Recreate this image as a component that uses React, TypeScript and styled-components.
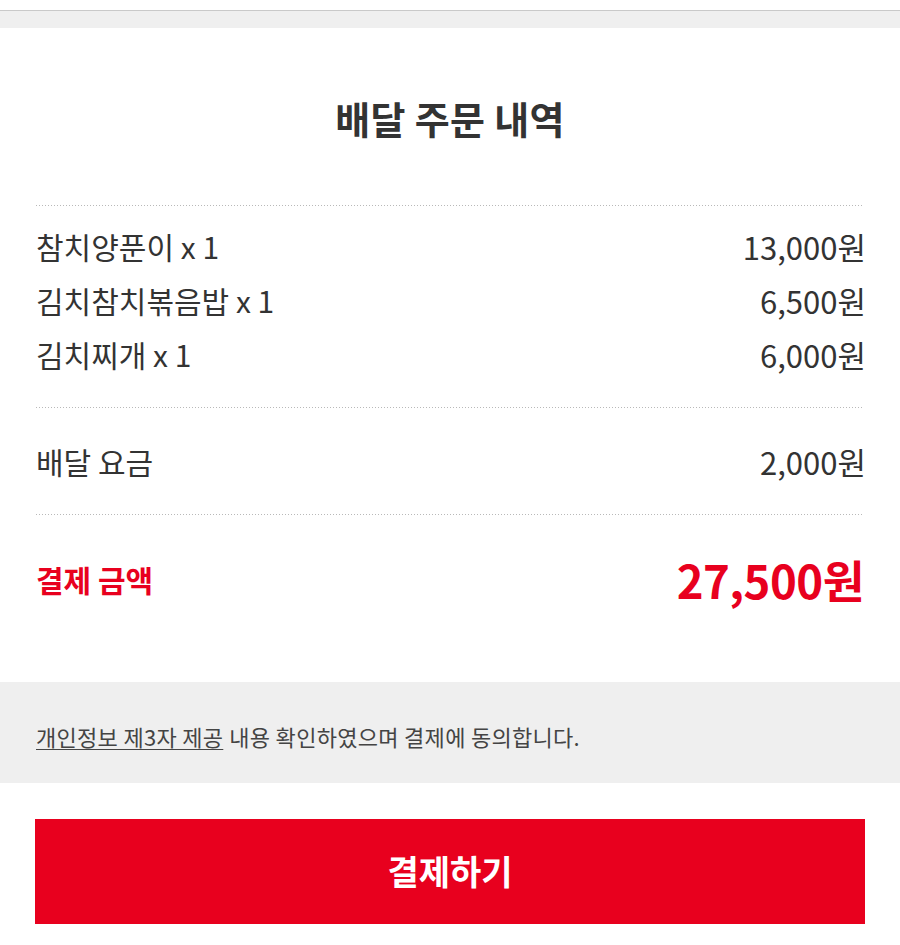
import React from "react";
import styled, { createGlobalStyle } from "styled-components";

const GlobalStyle = createGlobalStyle`
  html, body { margin: 0; padding: 0; background: #ffffff; }
  body {
    font-family: "Noto Sans CJK KR", "Noto Sans", sans-serif;
    color: #333333;
  }
  * { box-sizing: border-box; }
`;

const RED = "#e8001e";

const Page = styled.div`
  width: 900px;
  display: flex;
  flex-direction: column;
`;

const TopBar = styled.div`
  height: 28px;
  border-top: 10px solid #ffffff;
  background: #efefef;
  box-shadow: inset 0 1px 0 #c9c9c9;
`;

const Section = styled.div`
  padding: 0 36px;
  display: flex;
  flex-direction: column;
`;

const Title = styled.h1`
  margin: 0;
  height: 177px;
  display: flex;
  align-items: center;
  justify-content: center;
  padding-top: 2px;
  font-size: 38px;
  font-weight: 700;
  color: #333333;
  letter-spacing: 0.3px;
`;

const Dotted = styled.div`
  height: 1px;
  background-image: linear-gradient(to right, #b9b9b9 1px, transparent 1px);
  background-size: 3px 1px;
  background-repeat: repeat-x;
`;

const Group = styled.div<{ $top: number; $bottom: number }>`
  padding-top: ${(p) => p.$top}px;
  padding-bottom: ${(p) => p.$bottom}px;
  display: flex;
  flex-direction: column;
`;

const Row = styled.div`
  height: 54px;
  display: flex;
  align-items: center;
  justify-content: space-between;
  font-size: 30px;
  color: #333333;
`;

const Price = styled.span`
  font-size: 31px;
  margin-right: -2px;
`;

const TotalRow = styled.div`
  height: 60px;
  display: flex;
  align-items: center;
  justify-content: space-between;
  color: ${RED};
  font-weight: 700;
`;

const TotalLabel = styled.span`
  font-size: 30px;
`;

const TotalValue = styled.span`
  font-size: 45.5px;
  letter-spacing: -0.5px;
`;

const Notice = styled.div`
  height: 101px;
  background: #efefef;
  display: flex;
  align-items: center;
  padding: 6px 36px 0;
  font-size: 22px;
  color: #444444;
  letter-spacing: 0.3px;
`;

const NoticeLink = styled.span`
  text-decoration: underline;
  text-underline-offset: 3px;
  text-decoration-thickness: 1px;
  margin-right: 6px;
`;

const Footer = styled.div`
  padding: 36px 35px 21px;
`;

const PayButton = styled.button`
  width: 100%;
  height: 105px;
  border: none;
  background: ${RED};
  color: #ffffff;
  font-family: "Noto Sans CJK KR", "Noto Sans", sans-serif;
  font-size: 34px;
  font-weight: 700;
  padding: 0 0 2px;
  cursor: pointer;
`;

const items = [
  { name: "참치양푼이 x 1", price: "13,000원" },
  { name: "김치참치볶음밥 x 1", price: "6,500원" },
  { name: "김치찌개 x 1", price: "6,000원" },
];

export default function App() {
  return (
    <Page>
      <GlobalStyle />
      <TopBar />
      <Section>
        <Title>배달 주문 내역</Title>
        <Dotted />
        <Group $top={13} $bottom={26}>
          {items.map((it) => (
            <Row key={it.name}>
              <span>{it.name}</span>
              <Price>{it.price}</Price>
            </Row>
          ))}
        </Group>
        <Dotted />
        <Group $top={26} $bottom={26}>
          <Row>
            <span>배달 요금</span>
            <Price>2,000원</Price>
          </Row>
        </Group>
        <Dotted />
        <Group $top={34} $bottom={73}>
          <TotalRow>
            <TotalLabel>결제 금액</TotalLabel>
            <TotalValue>27,500원</TotalValue>
          </TotalRow>
        </Group>
      </Section>
      <Notice>
        <NoticeLink>개인정보 제3자 제공</NoticeLink>
        내용 확인하였으며 결제에 동의합니다.
      </Notice>
      <Footer>
        <PayButton>결제하기</PayButton>
      </Footer>
    </Page>
  );
}
